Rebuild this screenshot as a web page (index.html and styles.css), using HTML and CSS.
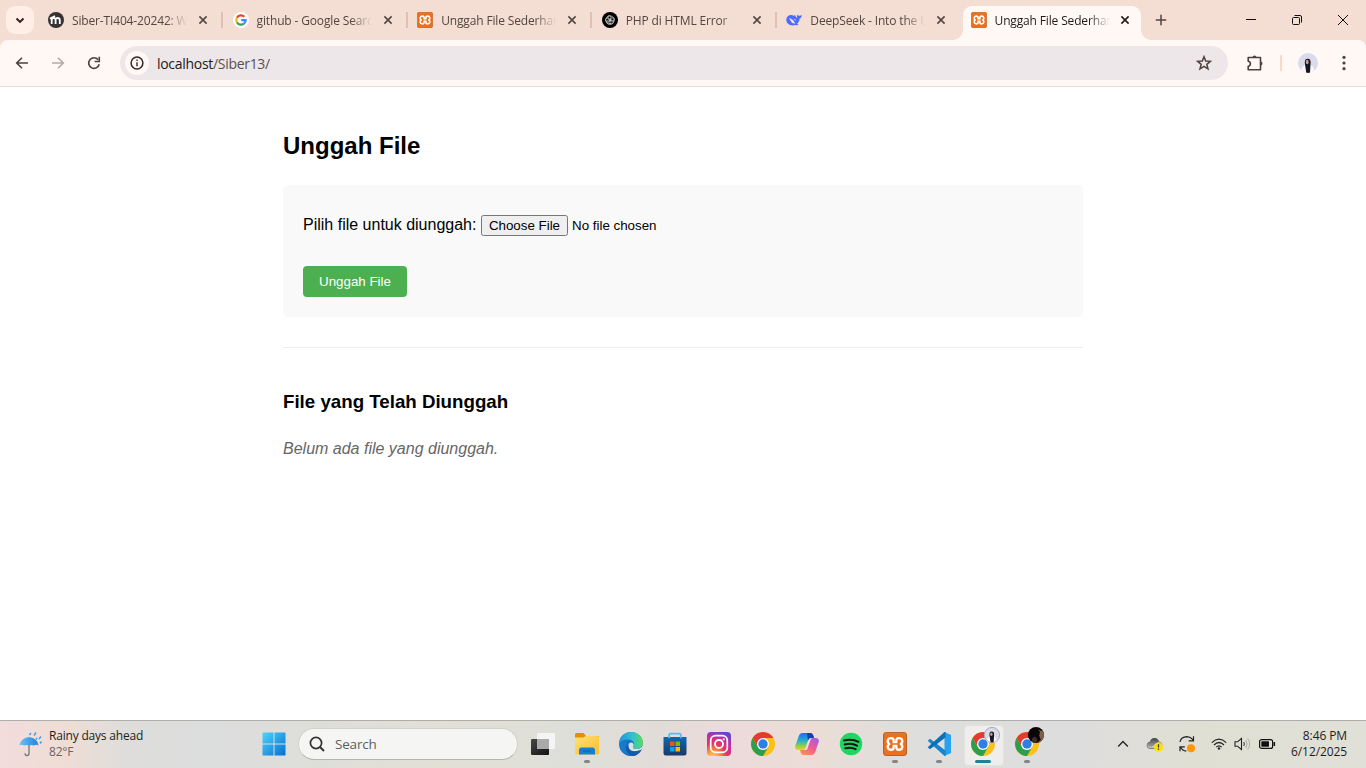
FILE: index.html
```html
<!DOCTYPE html>
<html lang="id">
<head>
<meta charset="utf-8">
<title>Unggah File Sederhana</title>
<link rel="stylesheet" href="styles.css">
</head>
<body>
<svg class="defs" width="0" height="0" aria-hidden="true">
  <defs>
    <linearGradient id="gWin" x1="0" y1="0" x2="1" y2="1"><stop offset="0" stop-color="#4fd3fb"/><stop offset="1" stop-color="#0270d4"/></linearGradient>
    <linearGradient id="gFold" x1="0" y1="0" x2="1" y2="1"><stop offset="0" stop-color="#ffe07a"/><stop offset="1" stop-color="#fbbd2c"/></linearGradient>
    <linearGradient id="gEdgeA" x1="0" y1=".3" x2="1" y2=".3"><stop offset="0" stop-color="#2294dc"/><stop offset=".55" stop-color="#2fc0d2"/><stop offset="1" stop-color="#62d957"/></linearGradient>
    <linearGradient id="gEdgeB" x1="0" y1="0" x2="1" y2="1"><stop offset="0" stop-color="#1c8bdc"/><stop offset="1" stop-color="#0c4ba0"/></linearGradient>
    <linearGradient id="gStore" x1="0" y1="0" x2="0" y2="1"><stop offset="0" stop-color="#1268ae"/><stop offset="1" stop-color="#183a6a"/></linearGradient>
    <radialGradient id="gInsta" cx=".25" cy="1.05" r="1.15"><stop offset="0" stop-color="#ffd75a"/><stop offset=".25" stop-color="#fb9040"/><stop offset=".5" stop-color="#e9335f"/><stop offset=".75" stop-color="#c22fa0"/><stop offset="1" stop-color="#5b49d0"/></radialGradient>
    <linearGradient id="gCopA" x1="0" y1="0" x2="0" y2="1"><stop offset="0" stop-color="#1c6ff0"/><stop offset=".45" stop-color="#28b0c8"/><stop offset=".75" stop-color="#8bcf50"/><stop offset="1" stop-color="#f5cf20"/></linearGradient>
    <linearGradient id="gCopB" x1=".8" y1="0" x2=".2" y2="1"><stop offset="0" stop-color="#a958ee"/><stop offset=".5" stop-color="#ee5a90"/><stop offset="1" stop-color="#fa9455"/></linearGradient>
    <linearGradient id="gUmb" x1="0" y1="0" x2="1" y2="0"><stop offset="0" stop-color="#6bc1f8"/><stop offset="1" stop-color="#1c82dc"/></linearGradient>
    <linearGradient id="gTask" x1="0" y1="0" x2="1" y2="1"><stop offset="0" stop-color="#484848"/><stop offset="1" stop-color="#111"/></linearGradient>
    <linearGradient id="gCloud" x1="0" y1="0" x2="0" y2="1"><stop offset="0" stop-color="#444"/><stop offset="1" stop-color="#aaa"/></linearGradient>
    <clipPath id="round"><circle cx="10" cy="10" r="10"/></clipPath>
  </defs>
  <symbol id="close" viewBox="0 0 10 10"><path d="M1.400 1.400 8.600 8.600M8.600 1.400 1.400 8.600" stroke="currentColor" stroke-width="1.600" fill="none"/></symbol>
  <symbol id="xampp" viewBox="0 0 24 24"><rect x=".5" y=".5" width="23" height="23" rx="2.500" fill="#ec6f1c" stroke="#b9632b"/><path d="M2 1.600h20" stroke="#c97e50" stroke-width="1.600"/><path d="M8.300 6.200C4.200 6.200 3.700 10.500 6.300 12 3.700 13.500 4.200 17.800 8.300 17.800c2 0 2.400-1.300 2.400-2.800V9c0-1.500-.4-2.800-2.400-2.800zM15.700 6.200c4.100 0 4.600 4.300 2 5.800 2.600 1.500 2.100 5.800-2 5.800-2 0-2.400-1.300-2.400-2.800V9c0-1.500.4-2.800 2.400-2.800z" fill="none" stroke="#fff" stroke-width="2.300" stroke-linejoin="round"/><path d="M10 9.500h4v5h-4z" fill="#fff"/><path d="M8.300 9.300v1.200q0 1.500 1.500 1.500h4.400q1.500 0 1.500-1.500V9.300M8.300 14.700v-1.200q0-1.500 1.500-1.500M15.700 14.700v-1.200q0-1.500-1.500-1.500" fill="none" stroke="#ec6f1c" stroke-width="1.300"/></symbol>
  <symbol id="chrome" viewBox="0 0 24 24"><circle cx="12" cy="12" r="12" fill="#fbc116"/><path d="M1.610 6A12 12 0 0 1 22.390 6H12L6.800 15z" fill="#e33b2e"/><path d="M1.610 6A12 12 0 0 0 12 24L17.200 15 6.800 15z" fill="#2d9e4b"/><circle cx="12" cy="12" r="6" fill="#fff"/><circle cx="12" cy="12" r="4.700" fill="#2f7de9"/></symbol>
  <symbol id="person" viewBox="0 0 20 20"><g clip-path="url(#round)"><path d="M0 0h20v20H0z" fill="#dadbea"/><path d="M3.500 20v-5l3.500-3.500h5.500L16 15v5z" fill="#f8f8fb"/><path d="M6.800 10q-.3-4.300 2.900-4.300t2.900 4.300L12 20H8.300z" fill="#15161f"/><ellipse cx="9.200" cy="9" rx="1.500" ry="2.200" fill="#c69a87"/></g></symbol>
</svg>

<div class="browser">
  <header class="tabstrip">
    <button class="tabsearch" aria-label="Tab"><svg width="10" height="7" viewBox="0 0 10 7"><path d="M1.500 1.500 5 5l3.500-3.500" fill="none" stroke="#2a201d" stroke-width="1.900"/></svg></button>
    <nav class="tabs">
      <div class="tab first">
        <svg class="favicon" viewBox="0 0 16 16"><circle cx="8" cy="8" r="8" fill="#333"/><path d="M3.700 12V7.800q0-1.800 1.900-1.800t2 1.800V12M7.600 12V7.800q0-1.800 2-1.800t2.200 1.800V12M2 6.600 7 4" fill="none" stroke="#fff" stroke-width="1.800"/></svg>
        <span class="title">Siber-TI404-20242: W</span><svg class="x"><use href="#close"/></svg>
      </div>
      <div class="tab">
        <svg class="favicon" viewBox="0 0 16 16"><circle cx="8" cy="8" r="8" fill="#fff"/><g fill="none" stroke-width="2.300"><path d="M3.900 5.700A4.700 4.700 0 0 1 11.300 4.700" stroke="#ea4335"/><path d="M3.900 5.700a4.700 4.700 0 0 0 0 4.600" stroke="#fbbc05"/><path d="M3.900 10.300a4.700 4.700 0 0 0 7 1.400" stroke="#34a853"/><path d="M10.900 11.700q1.800-1.500 1.700-3.600H8.200" stroke="#4285f4"/></g></svg>
        <span class="title">github - Google Search</span><svg class="x"><use href="#close"/></svg>
      </div>
      <div class="tab">
        <svg class="favicon"><use href="#xampp"/></svg>
        <span class="title">Unggah File Sederhana</span><svg class="x"><use href="#close"/></svg>
      </div>
      <div class="tab">
        <svg class="favicon" viewBox="0 0 16 16"><circle cx="8" cy="8" r="8" fill="#000"/><g fill="none" stroke="#ccc" stroke-width=".7"><ellipse cx="9" cy="6.300" rx="3.500" ry="2.200" transform="rotate(30 9 6.300)"/><ellipse cx="9" cy="6.300" rx="3.500" ry="2.200" transform="rotate(90 8 8) rotate(30 9 6.300)"/><ellipse cx="9" cy="6.300" rx="3.500" ry="2.200" transform="rotate(150 8 8) rotate(30 9 6.300)"/><ellipse cx="9" cy="6.300" rx="3.500" ry="2.200" transform="rotate(210 8 8) rotate(30 9 6.300)"/><ellipse cx="9" cy="6.300" rx="3.500" ry="2.200" transform="rotate(270 8 8) rotate(30 9 6.300)"/></g></svg>
        <span class="title">PHP di HTML Error</span><svg class="x"><use href="#close"/></svg>
      </div>
      <div class="tab">
        <svg class="favicon" viewBox="0 0 16 16"><path d="M.3 7.600C.4 4.700 2.700 2.800 5.500 3c1 .1 1.600.5 2.300 1 .2-.7.7-1 1.400-.8-.1 1.200 1.100 2 2 2.700C10.800 4.800 11 3.300 11.900 2.500c.2 1 .8 1.300 1.500 1.300.9 0 1.600-.6 2.500-.8-.1 1.800-.9 3.200-2.400 3.700-.1 2.200-1 3.900-2.400 5.100.4.500 1 .6 1.600.8-.9.900-2.300.8-3.300.4C4.600 14.500.2 12 .3 7.600z" fill="#4d6bfe"/><path d="M3 6.200c2 .1 3.700 1.200 5 3.200l1.200 1.800c-1.700.7-3.200-.2-4.300-2C4.300 8 3.700 7 3 6.200zM8 6.700q1.700 0 2 1.800-1.800.1-2-1.800z" fill="#eee5f1"/></svg>
        <span class="title">DeepSeek - Into the Unknown</span><svg class="x"><use href="#close"/></svg>
      </div>
      <div class="tab active">
        <svg class="favicon"><use href="#xampp"/></svg>
        <span class="title">Unggah File Sederhana</span><svg class="x"><use href="#close"/></svg>
      </div>
    </nav>
    <svg class="plus" width="12" height="12" viewBox="0 0 12 12"><path d="M6 .8v10.400M.8 6h10.400" stroke="#51443f" stroke-width="1.500"/></svg>
    <div class="winbtns">
      <svg width="12" height="12" viewBox="0 0 12 12"><path d="M1 5.500h10" stroke="#111"/></svg>
      <svg width="12" height="12" viewBox="0 0 12 12"><rect x="1.500" y="3.500" width="7" height="7" rx="1" fill="none" stroke="#111"/><path d="M3.500 1.500H9q1.500 0 1.500 1.500v5.500" fill="none" stroke="#111"/></svg>
      <svg width="12" height="12" viewBox="0 0 12 12"><path d="M1 1l10 10M11 1 1 11" stroke="#111"/></svg>
    </div>
  </header>

  <div class="toolbar">
    <div class="navbtns">
      <svg width="14" height="14" viewBox="0 0 14 14"><path d="M13 7H2M7 1.700 1.700 7 7 12.300" fill="none" stroke="#4e413c" stroke-width="1.600"/></svg>
      <svg width="14" height="14" viewBox="0 0 14 14"><path d="M1 7h11M7 1.700 12.300 7 7 12.300" fill="none" stroke="#b1aaa7" stroke-width="1.600"/></svg>
      <svg width="14" height="14" viewBox="0 0 14 14"><path d="M12.200 8.300A5.300 5.300 0 1 1 11.200 3.800" fill="none" stroke="#4e413c" stroke-width="1.600"/><path d="M12.300.8v4.700H7.600" fill="none" stroke="#4e413c" stroke-width="1.600"/></svg>
    </div>
    <div class="omnibox">
      <span class="info"><svg width="14" height="14" viewBox="0 0 14 14"><circle cx="7" cy="7" r="5.900" fill="none" stroke="#2f2825" stroke-width="1.500"/><path d="M7 6.300v4M7 3.600v1.500" stroke="#2f2825" stroke-width="1.400"/></svg></span>
      <span class="url"><b>localhost</b>/Siber13/</span>
      <svg class="star" width="16" height="16" viewBox="0 0 16 16"><path d="M8 1.700 9.700 6l4.700.3-3.600 3 1.200 4.600L8 11.400l-4 2.500 1.200-4.600-3.600-3L6.300 6z" fill="none" stroke="#4e413c" stroke-width="1.500"/></svg>
    </div>
    <svg class="ext" width="18" height="18" viewBox="0 0 18 18"><path d="M2.200 3.500H14.500V15.700H2.200V12.200q2.200-.3 2.200-2.500T2.200 7.200z" fill="none" stroke="#4e413c" stroke-width="1.600" stroke-linejoin="round"/><path d="M6.500 3.500a2 2 0 0 1 4 0zM14.500 7.500a2 2 0 0 1 0 4z" fill="#4e413c"/></svg>
    <i class="divider"></i>
    <svg class="avatar" width="20" height="20"><use href="#person"/></svg>
    <svg class="menu" width="4" height="16" viewBox="0 0 4 16"><g fill="#4e413c"><circle cx="2" cy="2.300" r="1.600"/><circle cx="2" cy="8" r="1.600"/><circle cx="2" cy="13.700" r="1.600"/></g></svg>
  </div>
</div>

<main class="page">
  <h2>Unggah File</h2>
  <form class="upload">
    <div class="field"><label for="file">Pilih file untuk diunggah:</label> <input type="file" id="file"></div>
    <button type="button" class="submit">Unggah File</button>
  </form>
  <section class="files">
    <h3>File yang Telah Diunggah</h3>
    <p>Belum ada file yang diunggah.</p>
  </section>
</main>

<footer class="taskbar">
  <div class="weather">
    <svg width="24" height="26" viewBox="0 0 24 26"><path d="M10 12v10.500q0 2-2 2t-2-2.300" fill="none" stroke="#777" stroke-width="1.300"/><path d="M.5 14.500Q1.500 7 10 6q8.500 1 9.500 8.500-2-1.500-4.500 0-2.500-1-5 0-2.500-1-5 0-2.500-1.500-4.500 0z" fill="url(#gUmb)"/><path d="M12 2l-1.500 2M17 1.500 15 4.500M22 5.500l-2 2.500M18 7l-1 1.500M22.500 10.500 21 12.500" stroke="#3b9fea" stroke-width="1.400"/></svg>
    <div><div class="rain">Rainy days ahead</div><div class="temp">82°F</div></div>
  </div>
  <svg class="start" width="24" height="24" viewBox="0 0 24 24"><path d="M1 .5h10.500v11H.5V1q0-.5.5-.5zM12.500.5H23q.5 0 .5.500v10.500h-11zM.5 12.500h11v11H1q-.5 0-.5-.5zM12.500 12.500h11V23q0 .5-.5.500H12.500z" fill="url(#gWin)"/></svg>
  <div class="search"><svg width="16" height="16" viewBox="0 0 16 16"><circle cx="7" cy="7" r="5.600" fill="none" stroke="#333" stroke-width="1.700"/><path d="m11 11 4 4" stroke="#333" stroke-width="2"/></svg><span>Search</span></div>
  <div class="apps">
    <div class="app"><svg viewBox="0 0 24 24"><rect x="6" y="1" width="18" height="16" rx="1" fill="#f5f5f5"/><rect y="7" width="18" height="16" rx="1" fill="url(#gTask)"/><path d="M6 7h12v10H6z" fill="#aaa"/></svg></div>
    <div class="app run"><svg viewBox="0 0 24 24"><path d="M0 2.500Q0 1 1.500 1h7L11 4H24v8H0z" fill="#dd9200"/><path d="M0 5.500H8L11 4H22.500Q24 4 24 5.500V21q0 1.500-1.500 1.500h-21Q0 22.500 0 21z" fill="url(#gFold)"/><path d="M4 22.500V18q0-2.500 2.500-2.500h11Q20 15.500 20 18v4.500z" fill="#1680d0"/><path d="M8 19h8" stroke="#0761a8"/></svg></div>
    <div class="app"><svg viewBox="0 0 24 24"><circle cx="12" cy="12" r="12" fill="url(#gEdgeB)"/><path d="M0 11C.8 4.500 5.500 0 12 0c7 0 12 5 12 10.500 0 4-3 6.500-6.500 6.500-3.200 0-4-1.500-3.200-2.800C16.500 10.500 13 7.500 9 7.500 4.500 7.500 1 9.500 0 12z" fill="url(#gEdgeA)"/><path d="M8.500 9.500C4.500 14 7 22 13.500 23.800 6 24.300 1.500 19 1 14q1-4.500 7.500-4.500z" fill="#167bcd"/><path d="M9.500 12.500C8.500 18 14 21.500 22.500 17.500L24 15v-4c0 4-3 6-6.500 6-3.200 0-4-1.500-3.200-2.800 1-1.700-.2-3.700-2.300-3.700q-1.900 0-2.500 2z" fill="#dce4df"/><path d="M9.500 12.500C8 19 15 22 22.200 18.200 20 22 17 24 13.500 24 7.500 22.500 5.500 16 9.500 12.500z" fill="#1459aa"/></svg></div>
    <div class="app"><svg viewBox="0 0 24 24"><path d="M.5 5h23v16q0 2.500-2.500 2.500H3Q.5 23.500.5 21z" fill="url(#gStore)"/><path d="M6.200 6.200V3Q6.200 1.700 7.500 1.700h9Q17.800 1.700 17.800 3v3.200" fill="none" stroke="#40c6f4" stroke-width="1.800"/><path d="M7 9.500h4.500V14H7z" fill="#f25022"/><path d="M12.500 9.500H17V14h-4.500z" fill="#7fba00"/><path d="M7 15h4.500v4.500H7z" fill="#00a4ef"/><path d="M12.500 15H17v4.500h-4.500z" fill="#ffb900"/></svg></div>
    <div class="app"><svg viewBox="0 0 24 24"><rect width="24" height="24" rx="4" fill="url(#gInsta)"/><rect x="3.700" y="3.700" width="16.600" height="16.600" rx="4.800" fill="none" stroke="#fff" stroke-width="1.700"/><circle cx="12" cy="12" r="4" fill="none" stroke="#fff" stroke-width="1.800"/><circle cx="16.700" cy="7.300" r="1.100" fill="#fff"/></svg></div>
    <div class="app"><svg><use href="#chrome"/></svg></div>
    <div class="app"><svg viewBox="0 0 24 24"><path d="M7.500 1h8q2 0 2.800 2.500L19 6h-3q-2 0-2.800 2.500L10.500 16q-.8 2-2.800 2H3.500Q-.5 18 .3 14L3.800 4Q4.800 1 7.500 1z" fill="url(#gCopA)"/><path d="M12 1h3.500q2 0 2.800 2.500L19 6h-3q-2 0-3 2.500z" fill="#163fb0"/><path d="M16.500 23h-8q-2 0-2.800-2.500L5 18h3q2 0 2.800-2.500L13.500 8q.8-2 2.800-2h4.200Q24.500 6 23.700 10L20.200 20q-1 3-3.700 3z" fill="url(#gCopB)"/><path d="M14.500 6H16q-2 0-2.800 2.500L10.500 16q-.7 2-2.500 2h2.500q1.500 0 2-1.500L15.500 8q.5-2 2.500-2z" fill="#f1dfdc"/></svg></div>
    <div class="app"><svg viewBox="0 0 24 24"><circle cx="12" cy="12" r="11.200" fill="#1ed760"/><path d="M5 8.500q8-2.200 14.500 1.300M5.700 12.500q6.800-2 12.300 1.200M6.300 16.200q5.700-1.500 10.300 1" fill="none" stroke="#10140f" stroke-width="2" stroke-linecap="round"/></svg></div>
    <div class="app run"><svg><use href="#xampp"/></svg></div>
    <div class="app run"><svg viewBox="0 0 24 24"><path d="M17.500 0 24 3v18l-6.500 3z" fill="#27a2ec"/><path d="M.7 8.800 3 6.800 18.500 18.500V24h-1z" fill="#1684ce"/><path d="M.7 15.200 3 17.200 18.500 5.500V0h-1z" fill="#0c6fb7"/></svg></div>
    <div class="app run current"><svg><use href="#chrome"/></svg><svg class="badge" viewBox="0 0 20 20"><use href="#person" width="20" height="20"/><circle cx="10" cy="10" r="9.500" fill="none" stroke="#9999aa" stroke-width=".9"/></svg></div>
    <div class="app run"><svg><use href="#chrome"/></svg><svg class="badge" viewBox="0 0 20 20"><g clip-path="url(#round)"><path d="M0 0h20v20H0z" fill="#080706"/><path d="m12 3 3 3-1 5 2 5-5 4h9V6z" fill="#7c6049"/><path d="m5 14 4-2 3 4-2 4H5z" fill="#403025"/></g></svg></div>
  </div>
  <div class="tray">
    <svg class="chev" width="12" height="8" viewBox="0 0 12 8"><path d="m1.200 6.500 4.800-5 4.800 5" fill="none" stroke="#222" stroke-width="1.300"/></svg>
    <svg class="cloud" width="18" height="16" viewBox="0 0 18 16"><path d="M4 12.500q-3-.2-3-3t3-3Q5 2.500 8.500 2.500T13 6q3 .5 3 3.500t-3 3z" fill="#c5c5c5" stroke="#666" stroke-width=".8"/><path d="M1 9q0-3 3-3.500Q5 2 8.500 2T13 6L8 9 5 11.500z" fill="url(#gCloud)"/><circle cx="12.500" cy="11" r="4.500" fill="#ffe000"/><path d="M12.500 8.300v3.200M12.500 12.500v1.200" stroke="#333" stroke-width="1.200"/></svg>
    <svg class="sync" width="18" height="18" viewBox="0 0 18 18"><path d="M2 7Q3 2 9 1.700q4 .3 6.200 3.800M15.500 1.200v4.600h-4.800M2 16.300v-4.500h4.800M2.300 12q2.200 3.800 6 4.200" fill="none" stroke="#222" stroke-width="1.200"/><circle cx="13" cy="13.300" r="4" fill="#ff9600"/></svg>
    <svg class="wifi" width="16" height="12" viewBox="0 0 16 12"><g fill="none" stroke="#222" stroke-width="1.200"><path d="M.8 4.600q7.200-7 14.400 0M3 7q5-5 10 0M5.300 9.200q2.700-2.700 5.400 0"/></g><circle cx="8" cy="10.500" r="1.200" fill="#222"/></svg>
    <svg class="vol" width="17" height="14" viewBox="0 0 17 14"><path d="M1 4.800h2.500L7.500 1.500v11L3.500 9.200H1z" fill="none" stroke="#222" stroke-width="1.100"/><path d="M9.800 5q1 2 0 4" fill="none" stroke="#333"/><path d="M11.800 3.200q2.500 3.800 0 7.600M13.700 1.500q4 5.500 0 11" fill="none" stroke="#aaa"/></svg>
    <svg class="bat" width="17" height="10" viewBox="0 0 17 10"><rect x=".6" y=".6" width="13" height="8.800" rx="2" fill="none" stroke="#111" stroke-width="1.200"/><rect x="2.300" y="2.300" width="7.700" height="5.400" rx=".6" fill="#111"/><path d="M15.300 3v4" stroke="#111" stroke-width="1.600"/></svg>
    <div class="clock"><div>8:46 PM</div><div>6/12/2025</div></div>
  </div>
</footer>
</body>
</html>
```
FILE: styles.css
```css
* { box-sizing: border-box; }
html, body { height: 100%; }
body {
  margin: 0;
  display: flex;
  flex-direction: column;
  overflow: hidden;
  background: #fff;
  font-family: "Open Sans", "Noto Sans", sans-serif;
}
svg { display: block; flex: none; }
.defs { width: 0; height: 0; position: absolute; }

/* Browser frame */
.browser { flex: none; height: 87px; background: #f4ddd3; }
.tabstrip { display: flex; align-items: center; height: 40px; padding-left: 6px; }
.tabsearch {
  display: flex; align-items: center; justify-content: center;
  width: 28px; height: 28px; padding: 0; border: 0; border-radius: 9px;
  background: #ffede6;
}
.tabs { display: flex; height: 40px; margin-left: 2.600px; }
.tab {
  display: flex; align-items: center;
  width: 184.600px; height: 40px; padding-left: 11.400px;
  color: #544640;
  background: linear-gradient(#dfc0b4, #dfc0b4) 0 12px / 2px 16px no-repeat;
}
.tab.first { background: none; }
.favicon { width: 16px; height: 16px; }
.title {
  flex: none; width: 115px; margin-left: 8px; padding-top: 1px;
  overflow: hidden; white-space: nowrap;
  font-size: 12px; line-height: 18px; letter-spacing: -.15px;
  -webkit-mask-image: linear-gradient(90deg, #000 94px, transparent 115px);
  mask-image: linear-gradient(90deg, #000 94px, transparent 115px);
}
.x { width: 10px; height: 10px; margin-left: 11px; }
.tab.active {
  width: 178px; height: 34px; margin: 6px 0 0 3px; padding: 0 0 6px 8px;
  border-radius: 9px 9px 0 0; background: #fff8f5; color: #221a17;
  position: relative;
}
.tab.active .x { margin-left: 10px; }
.tab.active::before, .tab.active::after {
  content: ""; position: absolute; bottom: 0; width: 10px; height: 10px;
}
.tab.active::before { left: -10px; background: radial-gradient(circle at 0 0, transparent 9.500px, #fff8f5 10px); }
.tab.active::after { right: -10px; background: radial-gradient(circle at 100% 0, transparent 9.500px, #fff8f5 10px); }
.plus { margin-left: 14px; }
.winbtns { display: flex; gap: 34px; margin-left: auto; padding-right: 17px; }

.toolbar {
  display: flex; align-items: center;
  height: 47px; border-bottom: 1px solid #e6dfdc; border-radius: 8px 8px 0 0;
  background: #fff8f5;
}
.navbtns { display: flex; gap: 22px; margin-left: 15px; }
.omnibox {
  display: flex; align-items: center;
  width: 1108px; height: 34px; margin-left: 19px; padding: 0 16px 0 5px;
  border-radius: 17px; background: #ede7ea;
}
.info {
  display: flex; align-items: center; justify-content: center;
  width: 24px; height: 24px; border-radius: 50%; background: #fff8f5;
}
.url { margin-left: 8px; font-size: 14px; letter-spacing: -.3px; color: #5a504c; }
.url b { font-weight: 400; color: #201a18; }
.star { margin-left: auto; }
.ext { margin-left: 18px; }
.divider { width: 2px; height: 16px; margin-left: 16px; background: #fbd9c9; }
.avatar { margin-left: 16px; }
.menu { margin-left: 24px; }

/* Page */
.page {
  flex: 1; width: 800px; margin: 0 auto; padding-top: 40px;
  font: 16px/1.6 Arial, "Liberation Sans", sans-serif; color: #000;
}
.page h2 { margin: 0 0 20px; font-size: 24px; line-height: 38px; }
.upload { height: 132px; padding: 20px; border-radius: 5px; background: #f9f9f9; }
.field { height: 61px; padding-top: 7px; }
.field input { width: 250px; font: 13.333px Arial, "Liberation Sans", sans-serif; }
.submit {
  display: block; width: 104px; height: 31px; padding: 0;
  border: 0; border-radius: 4px; background: #4caf50; color: #fff;
  font: 13.333px Arial, "Liberation Sans", sans-serif;
}
.files { margin-top: 30px; padding-top: 39px; border-top: 1px solid #eee; }
.files h3 { margin: 0 0 19px; font-size: 18.720px; line-height: 30px; }
.files p { margin: 0; font-style: italic; color: #666; }

/* Taskbar */
.taskbar {
  display: flex; align-items: center; flex: none;
  height: 48px; padding-bottom: 1px; border-top: 1px solid #aeaeab;
  background: linear-gradient(90deg, #f2dcdc 0, #efddd5 65px, #dedddb 125px, #dcdddd 210px, #deded9 320px, #e2e0d5 440px, #dedfd8 560px, #e2dcd8 660px, #ecdbda 735px, #ebddd6 820px, #dededd 900px, #dedddd 1080px, #dfdfd3 1200px, #e1e0d8 1366px);
  color: #1d1d1d; font-size: 12px; line-height: 16px;
}
.weather { display: flex; align-items: center; width: 262px; padding-left: 19px; gap: 6px; }
.rain { letter-spacing: -.2px; }
.temp { color: #666; letter-spacing: -.2px; }
.search {
  display: flex; align-items: center; gap: 10px;
  width: 220px; height: 32px; margin-left: 12px; padding-left: 10px;
  border: 1px solid #d1d0cc; border-bottom-color: #b5b4ae; border-radius: 16px;
  background: #f5f5f3; color: #5e5e5e; font-size: 13.500px; letter-spacing: -.2px;
}
.apps { display: flex; margin-left: 3px; }
.app {
  display: flex; align-items: center; justify-content: center;
  width: 44px; height: 46px; position: relative;
}
.app > svg { width: 24px; height: 24px; position: relative; }
.app.run::after {
  content: ""; position: absolute; bottom: 4px; left: 19px;
  width: 6px; height: 3px; border-radius: 2px; background: #858583;
}
.app.current::before {
  content: ""; position: absolute; left: 3px; top: 4px; width: 38px; height: 39px;
  border: 1px solid #e2e2df; border-radius: 4px; background: #efeeed;
}
.app.run.current::after { left: 14px; width: 16px; background: #238097; }
.app > .badge { position: absolute; left: 23px; top: 6px; width: 16px; height: 16px; }
.tray { display: flex; align-items: center; flex: 1; padding-left: 68px; }
.cloud { margin-left: 17px; }
.sync { margin-left: 14px; }
.wifi { margin-left: 15px; }
.vol { margin-left: 7px; }
.bat { margin-left: 8px; }
.clock { margin-left: auto; padding-right: 19px; text-align: right; letter-spacing: -.1px; }
```
